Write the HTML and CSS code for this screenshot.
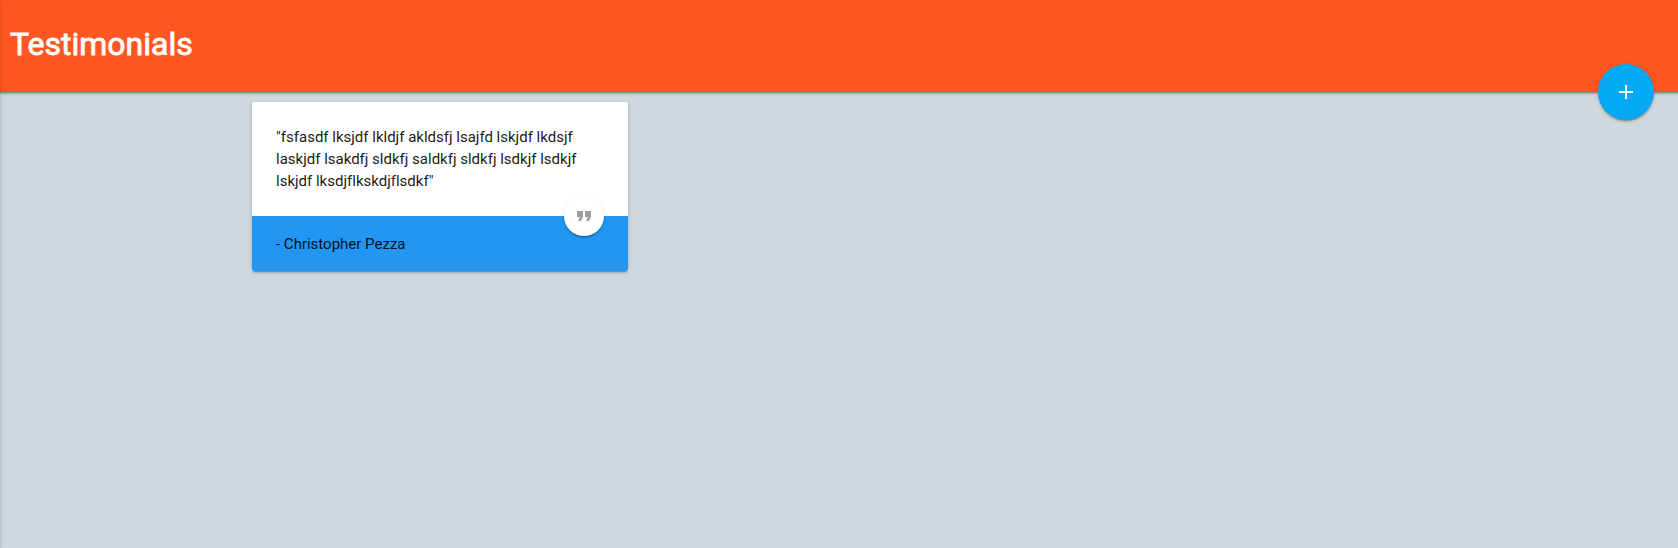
FILE: index.html
```html
<!DOCTYPE html>
<html lang="en">
<head>
<meta charset="utf-8">
<title>Testimonials</title>
<link rel="stylesheet" href="styles.css">
</head>
<body>
<header class="header">
  <h1 class="title">Testimonials</h1>
  <button class="fab" aria-label="Add testimonial">
    <svg width="24" height="24" viewBox="0 0 24 24" fill="currentColor"><path d="M19 13h-6v6h-2v-6H5v-2h6V5h2v6h6z"/></svg>
  </button>
</header>
<main class="content">
  <article class="card">
    <p class="quote">"fsfasdf lksjdf lkldjf akldsfj lsajfd lskjdf lkdsjf laskjdf lsakdfj sldkfj saldkfj sldkfj lsdkjf lsdkjf lskjdf lksdjflkskdjflsdkf"</p>
    <footer class="author">- Christopher Pezza
      <span class="badge">
        <svg width="24" height="24" viewBox="0 0 24 24" fill="currentColor"><path d="M6 17h3l2-4V7H5v6h3zm8 0h3l2-4V7h-6v6h3z"/></svg>
      </span>
    </footer>
  </article>
</main>
<aside class="drawer"></aside>
</body>
</html>
```
FILE: styles.css
```css
* { box-sizing: border-box; }
body {
  margin: 0;
  min-height: 100vh;
  overflow: hidden;
  background: #cfd8dc;
  font-family: Roboto, sans-serif;
  font-size: 15px;
  font-variant-ligatures: none;
  color: rgba(0, 0, 0, 0.92);
}
.header {
  position: relative;
  display: flex;
  align-items: center;
  height: 92px;
  margin: 0 -6px;
  padding: 0 16px;
  background: #ff5722;
  box-shadow: 0 2px 2px 0 rgba(0, 0, 0, 0.14), 0 1px 5px 0 rgba(0, 0, 0, 0.12), 0 3px 1px -2px rgba(0, 0, 0, 0.2);
}
.title {
  margin: 0;
  padding-bottom: 3px;
  font-size: 32px;
  font-weight: 400;
  line-height: 41px;
  color: #fff;
  -webkit-text-stroke: 0.8px #fff;
}
.fab {
  position: absolute;
  right: 30px;
  bottom: -28px;
  display: flex;
  align-items: center;
  justify-content: center;
  width: 56px;
  height: 56px;
  padding: 0;
  border: 0;
  border-radius: 50%;
  background: #03a9f4;
  color: #fff;
  box-shadow: 0 2px 2px 0 rgba(0, 0, 0, 0.14), 0 1px 5px 0 rgba(0, 0, 0, 0.12), 0 3px 1px -2px rgba(0, 0, 0, 0.2);
}
.content {
  display: flex;
  padding: 10px 252px;
}
.card {
  width: 376px;
  border-radius: 2px;
  background: #fff;
  box-shadow: 0 2px 2px 0 rgba(0, 0, 0, 0.14), 0 1px 5px 0 rgba(0, 0, 0, 0.12), 0 3px 1px -2px rgba(0, 0, 0, 0.2);
}
.quote {
  margin: 0;
  padding: 24px;
  line-height: 22px;
}
.author {
  position: relative;
  height: 55px;
  padding: 16px 24px;
  border-radius: 0 0 2px 2px;
  background: #2196f3;
  line-height: 24px;
}
.badge {
  position: absolute;
  top: -20px;
  right: 24px;
  display: flex;
  align-items: center;
  justify-content: center;
  width: 40px;
  height: 40px;
  border-radius: 50%;
  background: #fff;
  color: #9e9e9e;
  box-shadow: 0 2px 2px 0 rgba(0, 0, 0, 0.14), 0 1px 3px 0 rgba(0, 0, 0, 0.1), 0 3px 1px -2px rgba(0, 0, 0, 0.2);
}
.drawer {
  position: fixed;
  top: 0;
  left: -240px;
  width: 240px;
  height: 100%;
  box-shadow: 0 2px 2px 0 rgba(0, 0, 0, 0.14), 0 1px 5px 0 rgba(0, 0, 0, 0.12);
}
```
